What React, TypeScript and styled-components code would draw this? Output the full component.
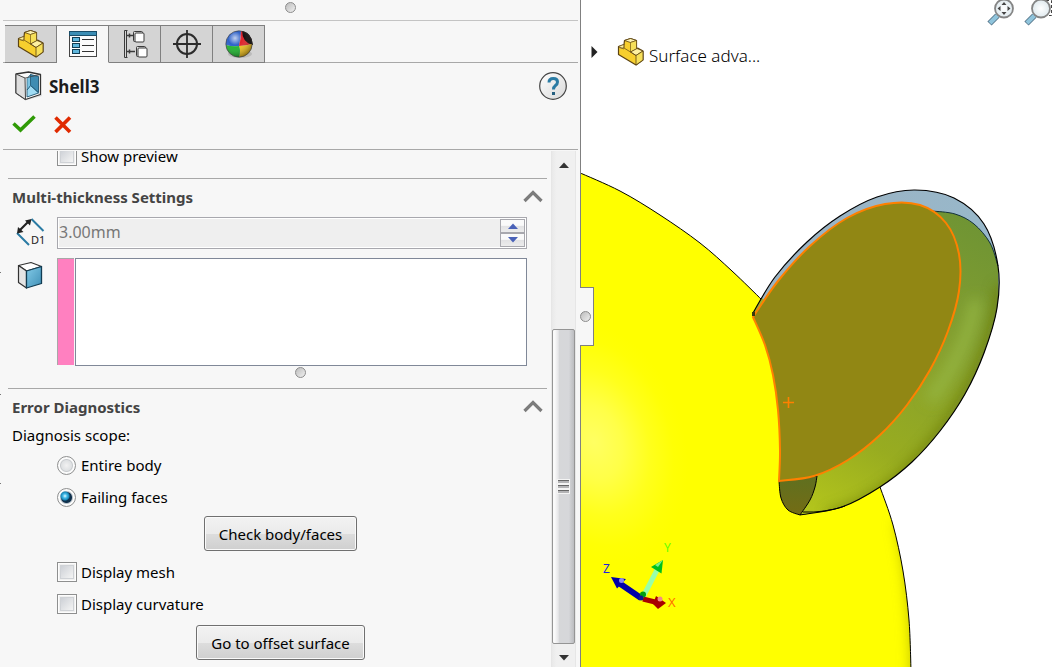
import React from "react";
import styled, { createGlobalStyle, css } from "styled-components";

const GlobalStyle = createGlobalStyle`
  * { box-sizing: border-box; }
  html, body { margin: 0; height: 100%; }
  body {
    background: #fff;
    color: #000;
    font-family: "Noto Sans", "Open Sans", sans-serif;
    font-size: 15px;
    overflow: hidden;
  }
  button, input { font: inherit; color: inherit; margin: 0; }
`;

const Window = styled.div`
  display: flex;
  height: 100vh;
`;

/* ---------- property manager panel ---------- */

const Panel = styled.aside`
  position: relative;
  flex: 0 0 581px;
  display: flex;
  flex-direction: column;
  min-height: 0;
  background: #f7f7f7;
  border-right: 1px solid #808080;
`;

const GripBar = styled.div`
  display: flex;
  justify-content: center;
  height: 21px;
  margin: 0 2px 0 3px;
  padding-top: 2px;
  border-bottom: 1px solid #c4c4c4;
`;

const Knob = styled.span`
  width: 11px;
  height: 11px;
  flex: none;
  border-radius: 50%;
  border: 1px solid #8c8c8c;
  background: linear-gradient(135deg, #bcbcbc, #f0f0f0);
`;

const Tabs = styled.nav`
  display: flex;
  height: 42px;
  margin: 0 2px 0 3px;
  padding: 4px 0 0 2px;
  background: linear-gradient(#a8a8a8, #a8a8a8) bottom / 100% 1px no-repeat;
`;

const Tab = styled.button<{ $active?: boolean }>`
  display: flex;
  align-items: center;
  justify-content: center;
  width: 52px;
  padding: 0;
  border: solid #808080;
  border-width: 1px 1px 1px 0;
  background: #d4d4d4;
  ${(p) => p.$active && css`
    background: #f7f7f7;
    border-bottom-color: #f7f7f7;
  `}
`;

const Title = styled.header`
  display: flex;
  align-items: center;
  gap: 6px;
  height: 46px;
  padding: 0 13px 0 14px;
`;

const TitleText = styled.h1`
  flex: 1;
  margin: 0;
  padding-top: 2px;
  color: #1c1c1c;
  font-size: 17px;
  line-height: 24px;
  font-weight: 700;
`;

const IconButton = styled.button`
  display: flex;
  align-items: center;
  justify-content: center;
  padding: 0;
  border: 0;
  background: none;
`;

const Actions = styled.div`
  display: flex;
  gap: 17px;
  height: 41px;
  margin: 0 2px 0 3px;
  padding: 4px 0 12px 9px;
  border-bottom: 1px solid #a8a8a8;
`;

const ScrollArea = styled.div`
  display: flex;
  flex: 1;
  min-height: 0;
  margin-top: 1px;
  padding-right: 4px;
  overflow: hidden;
`;

const Body = styled.div`
  flex: 1;
  padding: 0 4px 0 8px;
`;

const Section = styled.section`
  border-top: 1px solid #a8a8a8;
`;

const SectionHeader = styled.div`
  display: flex;
  align-items: center;
  justify-content: space-between;
  height: 38px;
  padding: 0 4px 3px;
`;

const SectionTitle = styled.h2`
  margin: 0;
  color: #444;
  font-size: 15px;
  line-height: 20px;
  font-weight: 700;
`;

const Field = styled.div`
  display: grid;
  grid-template-columns: 49px 1fr;
  padding-right: 20px;
  margin-bottom: 9px;
`;

const FieldIcon = styled.label`
  padding: 1px 0 0 8px;
  height: 30px;
`;

const Spin = styled.div`
  display: flex;
  height: 32px;
  padding: 1px;
  border: 1px solid #a8a8ae;
  background: #fff;
`;

const SpinInput = styled.input`
  flex: 1;
  min-width: 0;
  padding: 0 0 2px;
  border: 0;
  background: #efefef;
  color: #777;
  font-size: 16px;
`;

const SpinButtons = styled.div`
  display: flex;
  flex-direction: column;
  width: 25px;
`;

const SpinButton = styled.button`
  display: flex;
  flex: 1;
  align-items: center;
  justify-content: center;
  padding: 0;
  border: 1px solid #a8a8ae;
  background: linear-gradient(#fafafa 45%, #e2e2e4 50%, #ececec);
`;

const Selection = styled.div`
  display: flex;
  gap: 1px;
  height: 108px;
`;

const SelectionColor = styled.div`
  width: 17px;
  margin-bottom: 1px;
  border: solid #a8a8a8;
  border-width: 1px 0 0 1px;
  background: #ff80c0;
`;

const SelectionList = styled.div`
  flex: 1;
  border: 1px solid #808898;
  background: #fff;
`;

const SmallGrip = styled.div`
  display: flex;
  justify-content: center;
  height: 22px;
  margin-top: -9px;
  padding: 1px 0 0 46px;
`;

const ScopeLabel = styled.p`
  margin: -1px 0 5px;
  padding-left: 4px;
  line-height: 18px;
`;

const Option = styled.label<{ $clipped?: boolean }>`
  display: flex;
  align-items: center;
  gap: 4px;
  height: ${(p) => (p.$clipped ? 20 : 32)}px;
  margin: ${(p) => (p.$clipped ? "-5px 0 12px" : "0")};
  padding-left: 49px;
  line-height: 20px;
`;

const Check = styled.input`
  appearance: none;
  width: 20px;
  height: 20px;
  border: 1px solid #8e8f8f;
  background: linear-gradient(135deg, #cdd0d6, #f4f4f4) 3px 3px / 12px 12px no-repeat, #f6f6f6;
  box-shadow: inset 0 0 0 1px #fdfdfd, inset 0 0 0 2px #f0f0f0, inset 0 0 0 3px #cfd2d6;
`;

const Radio = styled.input`
  appearance: none;
  width: 19px;
  height: 19px;
  margin-right: 1px;
  border: 1px solid #8e8f8f;
  border-radius: 50%;
  background: radial-gradient(circle, #f2f2f2, #dfe1e3 5px, #c8cbce 6px, #fbfbfb 7px);
  &:checked {
    background:
      radial-gradient(circle at 7px 7px, #e8faff 0, #46bdea 2px, #1787b8 4px, transparent 5px),
      radial-gradient(circle, #10304c 5px, #b8c0c8 6px, #fbfbfb 7px);
  }
`;

const ButtonRow = styled.div<{ $top: number }>`
  display: flex;
  justify-content: center;
  padding-left: 6px;
  margin: ${(p) => p.$top}px 0 5px;
`;

const PushButton = styled.button`
  height: 35px;
  padding: 0 14px;
  border: 1px solid #707070;
  border-radius: 3px;
  background: linear-gradient(#f2f2f2, #ebebeb 50%, #dddddd 51%, #cfcfcf);
  box-shadow: inset 0 0 0 1px #fafafa;
  white-space: nowrap;
`;

const Scrollbar = styled.div`
  display: flex;
  flex-direction: column;
  width: 25px;
  border: solid #e6e6e6;
  border-width: 0 1px;
  background: linear-gradient(90deg, #e9e9e9, #f0f0f0 20%);
`;

const ScrollArrow = styled(IconButton)`
  height: 23px;
  flex: none;
  padding-top: 5px;
`;

const ScrollTrack = styled.div`
  display: flex;
  flex: 1;
  align-items: flex-end;
  min-height: 0;
`;

const Thumb = styled.div`
  display: flex;
  align-items: center;
  justify-content: center;
  width: 100%;
  height: 67%;
  border: 1px solid #959595;
  border-radius: 2px;
  background: linear-gradient(90deg, #fafafa 8%, #e6e6e8 25%, #d6d7d9 30%, #d6d7da 75%, #bcbdc0);
`;

const EdgeMarks = styled.svg`
  position: absolute;
  left: 0;
  top: 0;
  width: 1px;
  height: 100%;
`;

const Flyout = styled.button`
  position: absolute;
  z-index: 1;
  left: 100%;
  top: 287px;
  display: flex;
  align-items: center;
  width: 14px;
  height: 59px;
  padding: 0;
  border: 1px solid #808080;
  border-left: 0;
  background: #f7f7f7;
`;

/* ---------- graphics area ---------- */

const Viewport = styled.main`
  position: relative;
  flex: 1;
  min-width: 0;
  overflow: hidden;
  background: #fff;
`;

const Scene = styled.svg`
  position: absolute;
  inset: 0;
  width: 100%;
  height: 100%;
`;

const TreeRoot = styled.div`
  position: absolute;
  left: 10px;
  top: 36px;
  display: flex;
  align-items: center;
`;

const TreeIcon = styled.span`
  display: flex;
  margin: 0 4px 0 19px;
`;

const TreeText = styled.span`
  padding-top: 8px;
  font-size: 17px;
  line-height: 24px;
  font-weight: 300;
`;

const ViewTools = styled.div`
  position: absolute;
  right: 7px;
  top: 0;
  display: flex;
  gap: 9px;
`;

/* ---------- icons ---------- */

const PartIcon = () => (
  <svg width="28" height="30" viewBox="0 0 28 30" strokeLinejoin="round" stroke="#5c4312" strokeWidth="1.2">
    <path d="M1.5 9.5 7 7.500 7.500 3.5 13.500 1.5 19.500 3.500V11.500L21 11.200 26 14V23L19 28 1.500 17.500Z" fill="#f7cf2e" />
    <path d="M7.500 3.500 13.500 1.500 19.500 3.500 13.500 5.500Z" fill="#fdf2b0" strokeWidth=".8" />
    <path d="M13.500 5.500 19.500 3.500V12L13.500 15Z" fill="#f6e05a" strokeWidth=".6" />
    <path d="M13.500 15 20 11.500 26 14 19 18.500Z" fill="#fdf0a0" strokeWidth=".8" />
    <path d="M19 18.500 26 14V23L19 28Z" fill="#f6e05a" strokeWidth=".8" />
    <path d="M1.500 9.500 7 7.500V10.500L4 11.500Z" fill="#fdf0a0" strokeWidth=".5" />
    <path d="M7 7.500V11L13.500 15 19 18.500M1.500 9.500 7 12" fill="none" strokeWidth=".7" />
  </svg>
);

const ListIcon = () => (
  <svg width="30" height="28" viewBox="0 0 30 28">
    <rect x="1.500" y="1.500" width="27" height="25" fill="#fbfbfb" stroke="#444" />
    <rect x="1.500" y="1.500" width="27" height="4" fill="#3b8db4" stroke="#1b4d68" />
    {[7.5, 13.5, 19.5].map((y) => (
      <g key={y}>
        <rect x="4.500" y={y} width="7" height="4" fill="#5fb6dc" stroke="#123c52" />
        <path d={`M14 ${y + 2}h12`} stroke="#333" />
      </g>
    ))}
  </svg>
);

const ConfigIcon = () => (
  <svg width="26" height="30" viewBox="0 0 26 30" fill="none" stroke="#3a3a3a">
    <path d="M5.500 1.500H2.500v27h3M4.500 2v26" />
    <path d="M5 6.500h6M5 22.500h8M7.500 4.500v4M7.500 20.500v4" strokeWidth="1.500" />
    <rect x="11.500" y="2.500" width="9" height="10" rx="1" fill="#e2e2e2" />
    <rect x="13" y="4" width="9" height="9" rx="1" fill="#fff" />
    <rect x="14.500" y="17.500" width="9" height="10" rx="1" fill="#e2e2e2" />
    <rect x="16" y="19" width="9" height="9" rx="1" fill="#fff" />
  </svg>
);

const TargetIcon = () => (
  <svg width="28" height="28" viewBox="0 0 28 28" fill="none" stroke="#2c2c2c" strokeWidth="2">
    <circle cx="14" cy="14" r="10" />
    <path d="M14 0v28M0 14h28" strokeWidth="1.800" />
  </svg>
);

const BallIcon = () => (
  <svg width="30" height="30" viewBox="0 0 30 30">
    <defs>
      <radialGradient id="ballShade" cx="35%" cy="28%" r="75%">
        <stop offset="0" stopColor="#fff" stopOpacity=".7" />
        <stop offset=".35" stopColor="#fff" stopOpacity="0" />
        <stop offset="1" stopColor="#000" stopOpacity=".4" />
      </radialGradient>
    </defs>
    <ellipse cx="16" cy="25" rx="12" ry="4" fill="#bbb" />
    <path d="M15 17Q8 18 2 16A13 13 0 0 1 17 2Q17 9 15 17Z" fill="#2f62c8" />
    <path d="M17 2A13 13 0 0 1 28 15Q21 17 15 17Q17 9 17 2Z" fill="#e0222a" />
    <path d="M19 3Q27 5 28 15Q19 12 19 3Z" fill="#0a0505" stroke="#0a0505" strokeWidth="1.500" />
    <path d="M28 15A13 13 0 0 1 15 28Q17 22 15 17Q21 17 28 15Z" fill="#f0c01c" />
    <path d="M15 28A13 13 0 0 1 2 16Q8 18 15 17Q17 22 15 28Z" fill="#1cb42c" />
    <circle cx="15" cy="15" r="13.200" fill="url(#ballShade)" stroke="#333" strokeWidth=".6" />
  </svg>
);

const ShellIcon = () => (
  <svg width="29" height="30" viewBox="0 0 29 30" strokeLinejoin="round">
    <path d="M11 29.500 28 25 26 21 12 25Z" fill="#ddd" />
    <path d="M2 3 14.500 1 26.500 3.500V23.500L11.500 28.500 2 22Z" fill="#fafafa" stroke="#333" strokeWidth="1.300" />
    <path d="M2 3 11 7 11.500 28.500 2 22Z" fill="#dedede" stroke="#444" />
    <path d="M13 7.500 16.500 3.500 24.500 5.500V22L13 26Z" fill="#63b2d6" />
    <path d="M16.500 3.500 24.500 5.500V21.500L16.500 14.500Z" fill="#3f8cb2" stroke="#174a66" strokeWidth=".8" />
    <path d="M13 19 16.500 14.500 24.500 22 13 26Z" fill="#a0dcf4" stroke="#174a66" strokeWidth=".8" />
    <path d="M13 7.500 16.500 3.500V14.500L13 19Z" fill="#7cc3e2" stroke="#174a66" strokeWidth=".6" />
    <path d="M11 7 26.500 3.500" stroke="#444" strokeWidth=".8" />
  </svg>
);

const HelpIcon = () => (
  <svg width="28" height="28" viewBox="0 0 28 28">
    <defs>
      <linearGradient id="helpFill" x1="0" y1="0" x2="1" y2="1">
        <stop offset="0" stopColor="#fff" />
        <stop offset="1" stopColor="#d8d8d8" />
      </linearGradient>
    </defs>
    <circle cx="14" cy="14" r="13.300" fill="url(#helpFill)" stroke="#444" strokeWidth="1.200" />
    <path d="M10 10.500Q10 6.500 14.300 6.500Q18.500 6.500 18.500 10Q18.500 12 16.500 13.500Q14.500 15 14.500 17.500" fill="none" stroke="#2a7ba4" strokeWidth="3" />
    <rect x="13" y="20" width="3" height="3" fill="#245f80" />
  </svg>
);

const CheckIcon = () => (
  <svg width="24" height="20" viewBox="0 0 24 20">
    <path d="M1.500 8.500 8.500 15 22.500 1.500" fill="none" stroke="#2f9a06" strokeWidth="3.600" />
  </svg>
);

const CrossIcon = () => (
  <svg width="20" height="20" viewBox="0 0 20 20">
    <path d="M2.500 2.500 17 17M17 2.500 2.500 17" fill="none" stroke="#e02a00" strokeWidth="3.600" />
  </svg>
);

const ChevronIcon = () => (
  <svg width="20" height="13" viewBox="0 0 20 13">
    <path d="M1.500 11 10 2.500 18.500 11" fill="none" stroke="#7c7c7c" strokeWidth="3.200" />
  </svg>
);

const ThicknessIcon = () => (
  <svg width="30" height="30" viewBox="0 0 30 30">
    <path d="M15.500 1 27.500 13M1 15 13 27" stroke="#2a7ba4" strokeWidth="2" />
    <path d="M3 13 13 3" stroke="#222" strokeWidth="2.200" />
    <path d="M15.500 1 14 7.500 9 2.500ZM1 15.500 2 9 7.500 14Z" fill="#222" />
    <text x="15" y="26" fontSize="11" fill="#222">D1</text>
  </svg>
);

const FaceIcon = () => (
  <svg width="30" height="30" viewBox="0 0 30 30" strokeLinejoin="round">
    <defs>
      <linearGradient id="faceBlue" x1="0" y1="0" x2="1" y2="1">
        <stop offset="0" stopColor="#83cbe8" />
        <stop offset="1" stopColor="#3f8fb6" />
      </linearGradient>
    </defs>
    <path d="M2.500 6.500 15 3.500 25.500 7.500 10.500 12Z" fill="#fff" stroke="#333" strokeWidth="1.200" />
    <path d="M2.500 6.500 10.500 12V29L2.500 23.500Z" fill="#e4e4e4" stroke="#333" strokeWidth="1.200" />
    <path d="M10.500 12 25.500 7.500V24.500L10.500 29Z" fill="url(#faceBlue)" stroke="#123c52" strokeWidth="1.300" />
  </svg>
);

const Arrow = ({ down, fill }: { down?: boolean; fill: string }) => (
  <svg width="10" height="6" viewBox="0 0 10 6">
    <path d={down ? "M0 0H10L5 5.500Z" : "M0 6H10L5 .5Z"} fill={fill} />
  </svg>
);

const ThumbGrip = () => (
  <svg width="14" height="16" viewBox="0 0 14 16">
    {[0, 5, 10].map((y) => (
      <g key={y}>
        <rect x="0" y={y} width="13" height="5" fill="#f4f4f4" />
        <rect x="1" y={y + 1} width="11" height="3" fill="#b4b4b6" />
        <path d={`M1 ${y + 1.5}h11`} stroke="#666" />
      </g>
    ))}
  </svg>
);

const Lens = ({ kind }: { kind: "fit" | "area" }) => (
  <svg width="28" height="27" viewBox="0 0 28 27">
    <defs>
      <radialGradient id="lensGlass">
        <stop offset="0" stopColor="#fff" />
        <stop offset="1" stopColor="#dfe9ee" />
      </radialGradient>
    </defs>
    {kind === "area" && <path d="M12 .5H27.500V15.500H20" fill="none" stroke="#444" strokeDasharray="3 2" />}
    <path d="M10.500 15.500 2.500 23.500" stroke="#56768a" strokeWidth="6" />
    <path d="M10.500 15.500 3 23" stroke="#8fc4dc" strokeWidth="4" />
    <circle cx="17" cy="8.500" r="9" fill="url(#lensGlass)" stroke="#858585" strokeWidth="1.800" />
    {kind === "fit" && (
      <path d="M17 2 19.500 5H14.500ZM17 15 14.500 12H19.500ZM10.500 8.500 13.500 6V11ZM23.500 8.500 20.500 6V11Z" fill="#444" />
    )}
  </svg>
);

/* ---------- model geometry ---------- */

type Pt = [number, number];

/* Catmull-Rom spline through the points, as cubic segments without the first move. */
const curve = (p: Pt[]) =>
  p.slice(0, -1).map((b, i) => {
    const a = p[i - 1] ?? b;
    const c = p[i + 1];
    const d = p[i + 2] ?? c;
    return `C${b[0] + (c[0] - a[0]) / 6} ${b[1] + (c[1] - a[1]) / 6} ${c[0] - (d[0] - b[0]) / 6} ${c[1] - (d[1] - b[1]) / 6} ${c[0]} ${c[1]}`;
  }).join("");
const spline = (p: Pt[]) => `M${p[0][0]} ${p[0][1]}${curve(p)}`;

const bodyTop: Pt[] = [[578, 172], [620, 191], [660, 215], [700, 243], [732, 271], [762, 300]];
const bodySide: Pt[] = [[880, 487], [893, 525], [903, 571], [909, 620], [911, 670]];
const earOuter: Pt[] = [
  [753, 313], [775, 277], [807, 242], [840, 216], [877, 197], [915, 190], [954, 198], [984, 224], [998, 266],
  [997, 308], [984, 353], [965, 394], [940, 431], [912, 462], [880, 487], [842, 507], [800, 515],
];
const rimInner: Pt[] = [[932, 211], [955, 214], [974, 224], [990, 243], [998, 266]];
const facePts: Pt[] = [
  [753, 317], [778, 281], [810, 246], [847, 218], [885, 204], [920, 205], [946, 223], [959, 254], [959, 291],
  [948, 331], [930, 370], [907, 405], [880, 435], [848, 460], [814, 476], [779, 481],
];
const faceSide: Pt[] = [[779, 481], [780, 450], [778, 410], [773, 375], [765, 345], [753, 317]];
const tubeLeft: Pt[] = [[779, 481], [781, 498], [788, 510], [800, 515]];
const tubeRight: Pt[] = [[800, 515], [810, 500], [815, 487], [817, 476]];

const bodyShape = `${spline(bodyTop)}L${bodySide[0].join(" ")}${curve(bodySide)}H578Z`;
const earShape = `${spline(rimInner)}${curve(earOuter.slice(8))}L817 475Z`;

const Model = () => (
  <Scene viewBox="581 0 478 667" preserveAspectRatio="xMinYMin slice" role="img" aria-label="Model view">
    <defs>
      <radialGradient id="bodyFill" gradientUnits="userSpaceOnUse" cx="0" cy="0" r="1" gradientTransform="translate(594 442) rotate(-18) scale(90 125)">
        <stop offset="0" stopColor="#ffff62" />
        <stop offset=".3" stopColor="#ffff48" />
        <stop offset=".6" stopColor="#ffff1c" />
        <stop offset=".85" stopColor="#ffff05" />
        <stop offset="1" stopColor="#ffff00" />
      </radialGradient>
      <linearGradient id="earFill" gradientUnits="userSpaceOnUse" x1="965" y1="215" x2="815" y2="510">
        <stop offset="0" stopColor="#6f9434" />
        <stop offset=".4" stopColor="#86a02e" />
        <stop offset=".75" stopColor="#98ac20" />
        <stop offset="1" stopColor="#b2c41c" />
      </linearGradient>
      <linearGradient id="rimFill" x1="0" y1="0" x2="1" y2="1">
        <stop offset="0" stopColor="#9cb2c0" />
        <stop offset="1" stopColor="#94bdd4" />
      </linearGradient>
      <linearGradient id="tubeFill" x1="0" y1="0" x2="0" y2="1">
        <stop offset="0" stopColor="#5f7020" />
        <stop offset="1" stopColor="#746c14" />
      </linearGradient>
      <filter id="soft" filterUnits="userSpaceOnUse" x="740" y="150" width="320" height="600">
        <feGaussianBlur stdDeviation="7" />
      </filter>
      <clipPath id="bodyClip"><path d={bodyShape} /></clipPath>
      <clipPath id="earClip"><path d={earShape} /></clipPath>
    </defs>

    <path d={bodyShape} fill="url(#bodyFill)" />
    <g clipPath="url(#bodyClip)">
      <path d="M906 520Q922 590 922 690" fill="none" stroke="#b8b800" strokeWidth="20" filter="url(#soft)" />
    </g>
    <path d={spline(bodyTop)} fill="none" stroke="#000" />
    <path d={spline(bodySide)} fill="none" stroke="#000" />

    <path d={`${spline(earOuter)}L817 475Z`} fill="url(#rimFill)" />
    <path d="M753 313 762 298 765 301 754 317Z" fill="#9cb030" />
    <path d={earShape} fill="url(#earFill)" />
    <g clipPath="url(#earClip)">
      <path d="M1002 285Q995 385 903 478Q863 511 828 517" fill="none" stroke="#6a7a10" strokeWidth="12" filter="url(#soft)" opacity=".8" />
      <path d="M976 300Q968 350 930 400" fill="none" stroke="#96b844" strokeWidth="10" filter="url(#soft)" />
    </g>
    <path d={spline(rimInner)} fill="none" stroke="#12303a" />
    <path d={spline(earOuter)} fill="none" stroke="#000" strokeWidth="1.200" />
    <path d="M803 512Q825 513 845 506" fill="none" stroke="#000" />
    <path d={`${spline(tubeLeft)}${curve(tubeRight)}Z`} fill="url(#tubeFill)" stroke="#000" />
    <path d={`${spline(facePts)}${curve(faceSide)}Z`} fill="#918714" stroke="#ff8000" strokeWidth="2" />
    <path d="M752 312h3v4h-3z" fill="#3a3a10" />
    <path d="M783 402.500h11M788.500 397v11" stroke="#ff8000" strokeWidth="1.600" />

    <path d="M641 598 619 583" stroke="#0000a8" strokeWidth="6" />
    <path d="M611 577 626 579 617 588.500Z" fill="#0000a8" />
    <circle cx="621.500" cy="580.500" r="2.500" fill="#8a8aee" />
    <path d="M643 597 657 570" stroke="#98ffa8" strokeWidth="5" />
    <path d="M663 560 661.500 573.500 651 567Z" fill="#00c01c" />
    <path d="M663 560 658 567 655 565Z" fill="#7af08c" />
    <path d="M643 599 659 603" stroke="#a80000" strokeWidth="5" />
    <path d="M656 596 666 603 658 609 653 604Z" fill="#a80000" />
    <circle cx="660" cy="599" r="2.500" fill="#f08a8a" />
    <circle cx="643" cy="594.500" r="3" fill="#00a010" />
    <circle cx="641" cy="598" r="2.500" fill="#101890" />
    <text x="603" y="573" fontSize="12" fill="#2222dd">Z</text>
    <text x="664" y="552" fontSize="12" fill="#66ff00">Y</text>
    <text x="668" y="607" fontSize="13" fill="#ff7000">X</text>
  </Scene>
);

const Collapse = () => (
  <IconButton aria-label="Collapse section"><ChevronIcon /></IconButton>
);

export default function App() {
  return (
    <Window>
      <GlobalStyle />
      <Panel>
        <GripBar><Knob /></GripBar>
        <Tabs>
          <Tab aria-label="Feature tree"><PartIcon /></Tab>
          <Tab $active aria-label="Properties"><ListIcon /></Tab>
          <Tab aria-label="Configurations"><ConfigIcon /></Tab>
          <Tab aria-label="Dimensions"><TargetIcon /></Tab>
          <Tab aria-label="Display"><BallIcon /></Tab>
        </Tabs>
        <Title>
          <ShellIcon />
          <TitleText>Shell3</TitleText>
          <IconButton aria-label="Help"><HelpIcon /></IconButton>
        </Title>
        <Actions>
          <IconButton aria-label="OK"><CheckIcon /></IconButton>
          <IconButton aria-label="Cancel"><CrossIcon /></IconButton>
        </Actions>
        <ScrollArea>
          <Body>
            <Option $clipped><Check type="checkbox" />Show preview</Option>
            <Section>
              <SectionHeader>
                <SectionTitle>Multi-thickness Settings</SectionTitle>
                <Collapse />
              </SectionHeader>
              <Field>
                <FieldIcon htmlFor="thickness" aria-label="Thickness"><ThicknessIcon /></FieldIcon>
                <Spin>
                  <SpinInput id="thickness" defaultValue="3.00mm" readOnly />
                  <SpinButtons>
                    <SpinButton aria-label="Increase"><Arrow fill="#4a62b8" /></SpinButton>
                    <SpinButton aria-label="Decrease"><Arrow down fill="#4a62b8" /></SpinButton>
                  </SpinButtons>
                </Spin>
              </Field>
              <Field>
                <FieldIcon as="span"><FaceIcon /></FieldIcon>
                <Selection>
                  <SelectionColor />
                  <SelectionList role="listbox" aria-label="Faces" />
                </Selection>
              </Field>
              <SmallGrip><Knob /></SmallGrip>
            </Section>
            <Section>
              <SectionHeader>
                <SectionTitle>Error Diagnostics</SectionTitle>
                <Collapse />
              </SectionHeader>
              <ScopeLabel>Diagnosis scope:</ScopeLabel>
              <Option><Radio type="radio" name="scope" />Entire body</Option>
              <Option><Radio type="radio" name="scope" defaultChecked />Failing faces</Option>
              <ButtonRow $top={3}><PushButton>Check body/faces</PushButton></ButtonRow>
              <Option><Check type="checkbox" />Display mesh</Option>
              <Option><Check type="checkbox" />Display curvature</Option>
              <ButtonRow $top={5}><PushButton>Go to offset surface</PushButton></ButtonRow>
            </Section>
          </Body>
          <Scrollbar>
            <ScrollArrow aria-label="Scroll up"><Arrow fill="#333" /></ScrollArrow>
            <ScrollTrack><Thumb><ThumbGrip /></Thumb></ScrollTrack>
            <ScrollArrow aria-label="Scroll down"><Arrow down fill="#333" /></ScrollArrow>
          </Scrollbar>
        </ScrollArea>
        <EdgeMarks>
          <path d="M0 272.500h1M0 394.500h1M0 483.500h1" stroke="#777" />
        </EdgeMarks>
        <Flyout aria-label="Toggle panel"><Knob /></Flyout>
      </Panel>
      <Viewport>
        <Model />
        <TreeRoot>
          <svg width="7" height="12" viewBox="0 0 7 12"><path d="M.5 0 6.500 6 .5 12Z" fill="#222" /></svg>
          <TreeIcon><PartIcon /></TreeIcon>
          <TreeText>Surface adva...</TreeText>
        </TreeRoot>
        <ViewTools>
          <IconButton aria-label="Zoom to fit"><Lens kind="fit" /></IconButton>
          <IconButton aria-label="Zoom to area"><Lens kind="area" /></IconButton>
        </ViewTools>
      </Viewport>
    </Window>
  );
}
